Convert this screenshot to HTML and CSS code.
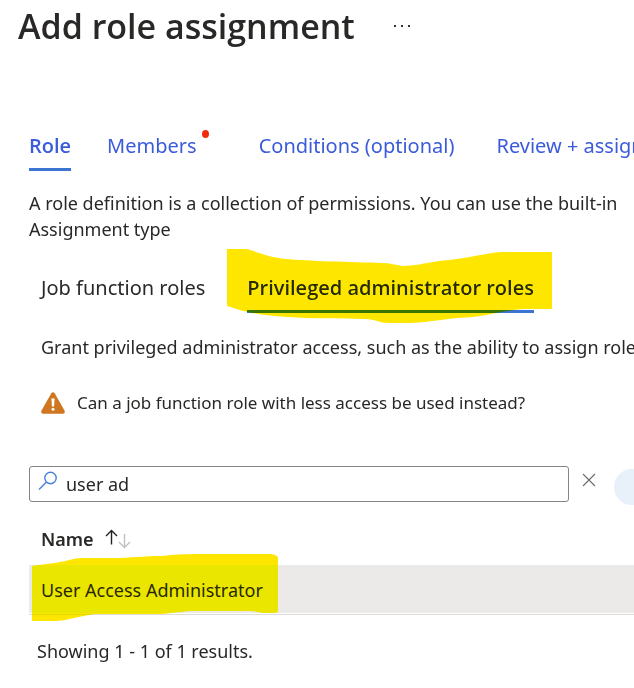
FILE: index.html
```html
<!DOCTYPE html>
<html lang="en">
<head>
<meta charset="utf-8">
<title>Add role assignment</title>
<link rel="stylesheet" href="styles.css">
</head>
<body>
<header class="header">
  <h1 class="title">Add role assignment</h1>
  <button class="more" type="button" aria-label="More actions">
    <svg width="18" height="4" viewBox="0 0 18 4" fill="#333"><rect x="1" y="1" width="2" height="2"/><rect x="8" y="1" width="2" height="2"/><rect x="15" y="1" width="2" height="2"/></svg>
  </button>
</header>
<main class="main">
  <nav class="tabs">
    <a class="tab tab-active" href="#role">Role</a>
    <a class="tab tab-members" href="#members">Members<span class="dot"></span></a>
    <a class="tab" href="#conditions">Conditions (optional)</a>
    <a class="tab tab-last" href="#review">Review + assign</a>
  </nav>
  <p class="line intro">A role definition is a collection of permissions. You can use the built-in</p>
  <p class="line">Assignment type</p>
  <section class="panel">
    <div class="subtabs">
      <button class="subtab" type="button">Job function roles</button>
      <button class="subtab subtab-active" type="button">Privileged administrator roles
        <svg class="marker marker-tab" width="326" height="76" viewBox="0 0 326 76"><path d="M0 1H19C30 3 35 8 58 11C80 13 125 14 155 15C163 15 169 17 175 18C190 18 200 14 222 12C241 10 260 5 275 4H325V61H297C275 62 260 69 230 70C210 72 195 75 182 75H161C153 75 147 71 139 71C115 70 85 71 60 69C30 67 18 64 0 58Z"/></svg>
      </button>
    </div>
    <p class="line grant">Grant privileged administrator access, such as the ability to assign roles</p>
    <p class="warning">
      <svg width="24" height="22" viewBox="0 0 24 22"><path d="M10.300 1.300Q12-.8 13.700 1.300L23.500 18.400Q24.600 21.700 22 21.800H2Q-.6 21.700.5 18.400Z" fill="#cf7620"/><path d="M10.400 6.500H13.600L13.100 14.500H10.900Z" fill="#fff"/><circle cx="12" cy="17.300" r="1.500" fill="#fff"/></svg>
      <span>Can a job function role with less access be used instead?</span>
    </p>
  </section>
  <div class="search">
    <label class="field">
      <svg width="20" height="20" viewBox="0 0 20 20" fill="none" stroke="#4a80d9" stroke-width="1.400"><circle cx="12.500" cy="7" r="5.700"/><path d="M8.500 11L1 18.500"/></svg>
      <input class="input" type="text" value="user ad" aria-label="Search roles">
    </label>
    <button class="clear" type="button" aria-label="Clear search">
      <svg width="14" height="14" viewBox="0 0 14 14" stroke="#6b6b6b" stroke-width="1.100"><path d="M1 1L13 13M13 1L1 13"/></svg>
    </button>
    <button class="pill" type="button" aria-label="Filter"></button>
  </div>
  <table class="table">
    <thead>
      <tr><th class="head" scope="col"><span class="head-inner">Name
        <svg width="26" height="20" viewBox="0 0 26 20" fill="none" stroke-width="1.400"><path d="M6.500 15.500V1.500M1 7L6.500 1.500L12 7" stroke="#222"/><path d="M19.500 5V18.500M14 13L19.500 18.500L25 13" stroke="#c0c0c0"/></svg>
      </span></th></tr>
    </thead>
    <tbody>
      <tr><td class="cell"><div class="cell-inner">User Access Administrator
        <svg class="marker marker-row" width="248" height="70" viewBox="0 0 248 70"><path d="M0 13C12 11 18 11 28 9C36 8 41 5 50 5H80C100 5 110 3 130 3C145 1 160 1 175 1H239Q246 2 246 5V58C246 60 243 60 240 60H230C226 59 222 58 218 58H165C150 58 145 60 130 61H65C50 62 38 67 25 68H0Z"/></svg>
      </div></td></tr>
    </tbody>
  </table>
  <p class="line results">Showing 1 - 1 of 1 results.</p>
</main>
</body>
</html>
```
FILE: styles.css
```css
* {
  box-sizing: border-box;
}

body {
  margin: 0;
  background: #fff;
  color: #292827;
  font: 18px/26px "Noto Sans", "Open Sans", sans-serif;
  overflow-x: hidden;
}

h1,
p {
  margin: 0;
}

button {
  padding: 0;
  border: 0;
  background: none;
  color: inherit;
  font: inherit;
}

svg {
  display: block;
  flex: none;
}

.header {
  display: flex;
  align-items: center;
  gap: 38px;
  padding: 6px 18px 0;
}

.title {
  font-family: "Open Sans", sans-serif;
  font-size: 34px;
  line-height: 40px;
  font-weight: 600;
}

.main {
  padding: 87px 0 24px 29px;
}

.tabs {
  display: flex;
  gap: 36px;
  font-size: 20px;
  white-space: nowrap;
  overflow-x: clip;
}

.tab {
  position: relative;
  padding-bottom: 9px;
  border-bottom: 3px solid transparent;
  color: #3b5bdb;
  text-decoration: none;
}

.tab-active,
.subtab-active {
  border-color: #3b74d1;
  font-family: "Open Sans", sans-serif;
  font-weight: 600;
}

.tab-members {
  margin-right: 26px;
}

.tab-last {
  margin-left: 6px;
}

.dot {
  position: absolute;
  top: -3px;
  right: -12px;
  width: 7px;
  height: 8px;
  border-radius: 50%;
  background: #ef2b0c;
}

.line {
  white-space: nowrap;
  overflow-x: clip;
}

.intro {
  margin-top: 19px;
}

.panel {
  padding: 33px 0 50px 12px;
}

.subtabs {
  display: flex;
  gap: 42px;
  font-size: 20px;
  white-space: nowrap;
}

.subtab {
  position: relative;
  padding-bottom: 9px;
  border-bottom: 3px solid transparent;
}

.subtab-active {
  border-color: #3b74d1;
}

.marker {
  position: absolute;
  fill: #ffe600;
  mix-blend-mode: darken;
  pointer-events: none;
}

.marker-tab {
  top: -27px;
  left: -20px;
}

.grant {
  margin-top: 21px;
}

.warning {
  display: flex;
  align-items: center;
  gap: 12px;
  margin-top: 30px;
  font-size: 17px;
  white-space: nowrap;
}

.search {
  display: flex;
  align-items: flex-start;
}

.field {
  display: flex;
  flex: 1;
  gap: 8px;
  height: 36px;
  padding: 4px 8px;
  border: 1px solid #858585;
  border-radius: 3px;
}

.input {
  flex: 1;
  min-width: 0;
  padding: 0;
  border: 0;
  outline: 0;
  background: none;
  color: inherit;
  font: inherit;
}

.clear {
  margin: 7px 18px 0 13px;
}

.pill {
  width: 20px;
  height: 36px;
  margin-top: 3px;
  border-radius: 18px 0 0 18px;
  background: #e8f0fa;
}

.table {
  width: 100%;
  border-collapse: collapse;
  border-bottom: 1px solid #dcdbda;
  text-align: left;
}

.head {
  height: 60px;
  padding: 8px 12px 0;
  font-weight: 600;
}

.head-inner {
  display: flex;
  align-items: center;
  gap: 11px;
}

.cell {
  padding: 0 0 1px;
}

.cell-inner {
  position: relative;
  padding: 12px 12px 10px;
  background: #ebeae9;
}

.marker-row {
  top: -12px;
  left: 3px;
}

.results {
  margin-top: 23px;
  padding-left: 8px;
}
```
